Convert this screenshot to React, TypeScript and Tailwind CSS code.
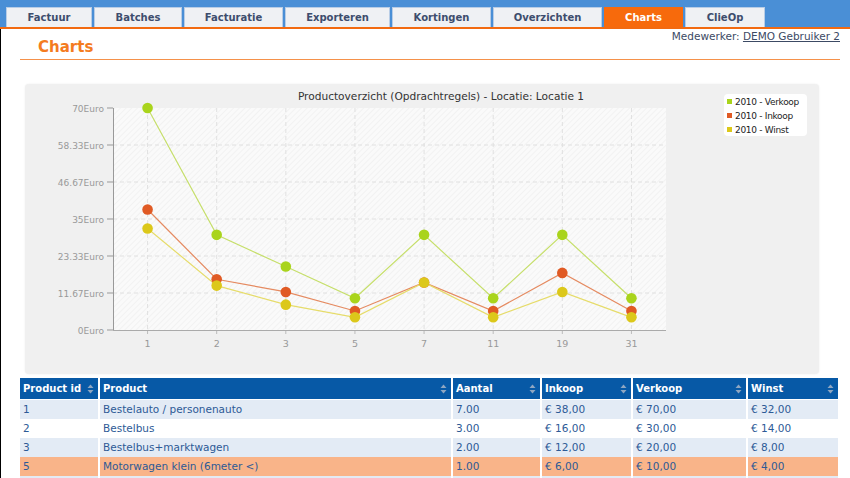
import React from "react";

const font = { fontFamily: "Tahoma, 'DejaVu Sans', sans-serif" };

const tabs = [
  { l: "Factuur", w: 86 },
  { l: "Batches", w: 88 },
  { l: "Facturatie", w: 99 },
  { l: "Exporteren", w: 105 },
  { l: "Kortingen", w: 99 },
  { l: "Overzichten", w: 109 },
  { l: "Charts", w: 79, active: true },
  { l: "ClieOp", w: 80 },
];

const cats = ["1", "2", "3", "5", "7", "11", "19", "31"];
const series = [
  { name: "2010 - Verkoop", color: "#a9d41c", line: "#c6df6a", data: [70, 30, 20, 10, 30, 10, 30, 10] },
  { name: "2010 - Inkoop", color: "#e05a24", line: "#e58a60", data: [38, 16, 12, 6, 15, 6, 18, 6] },
  { name: "2010 - Winst", color: "#dcc81a", line: "#e6dc6a", data: [32, 14, 8, 4, 15, 4, 12, 4] },
];
const yLabels = ["70Euro", "58.33Euro", "46.67Euro", "35Euro", "23.33Euro", "11.67Euro", "0Euro"];

const PX = 88, PY = 24, PW = 553, PH = 222;
const cx = (i: number) => PX + PW / 16 + (PW / 8) * i;
const cy = (v: number) => PY + PH - (v / 70) * PH;

function Chart() {
  return (
    <svg width={794} height={290} className="block">
      <defs>
        <pattern id="hatch" width="4" height="4" patternUnits="userSpaceOnUse" patternTransform="rotate(45)">
          <rect width="4" height="4" fill="#fafafa" />
          <line x1="0" y1="0" x2="0" y2="4" stroke="#f0f0f0" strokeWidth="1.5" />
        </pattern>
      </defs>
      <text x={416} y={16} textAnchor="middle" fontSize="10.6" fill="#333" style={font}>
        Productoverzicht (Opdrachtregels) - Locatie: Locatie 1
      </text>
      <rect x={PX} y={PY} width={PW} height={PH} fill="url(#hatch)" />
      {yLabels.map((l, i) => {
        const y = PY + (PH / 6) * i;
        return (
          <g key={l}>
            {i > 0 && i < 6 && (
              <line x1={PX} y1={y} x2={PX + PW} y2={y} stroke="#e0e0e0" strokeDasharray="4 3" />
            )}
            <line x1={PX - 6} y1={y} x2={PX} y2={y} stroke="#999" />
            <text x={PX - 9} y={y + 3.5} textAnchor="end" fontSize="9" fill="#999" style={font}>
              {l}
            </text>
          </g>
        );
      })}
      {cats.map((c, i) => (
        <g key={c}>
          <line x1={cx(i)} y1={PY} x2={cx(i)} y2={PY + PH} stroke="#e0e0e0" strokeDasharray="4 3" />
          <line x1={cx(i)} y1={PY + PH} x2={cx(i)} y2={PY + PH + 4} stroke="#bbb" />
          <text x={cx(i)} y={PY + PH + 17} textAnchor="middle" fontSize="9.5" fill="#999" style={font}>
            {c}
          </text>
        </g>
      ))}
      <line x1={PX + 0.5} y1={PY} x2={PX + 0.5} y2={PY + PH} stroke="#999" />
      <line x1={PX} y1={PY + PH + 0.5} x2={PX + PW} y2={PY + PH + 0.5} stroke="#aaa" />
      {series.map((s) => (
        <polyline
          key={s.name}
          points={s.data.map((v, i) => `${cx(i)},${cy(v)}`).join(" ")}
          fill="none"
          stroke={s.line}
          strokeWidth="1.2"
        />
      ))}
      {series.map((s) => (
        <g key={s.name + "d"}>
          {s.data.map((v, i) => (
            <circle key={i} cx={cx(i)} cy={cy(v)} r={5.3} fill={s.color} />
          ))}
        </g>
      ))}
      <rect x={699} y={10} width={83} height={42} rx={4} fill="#ffffff" />
      {series.map((s, i) => (
        <g key={s.name + "l"}>
          <rect x={702} y={15 + i * 14} width={5} height={5} fill={s.color} />
          <text x={710} y={21 + i * 14} fontSize="9" fill="#222" style={font} letterSpacing="-0.3">
            {s.name}
          </text>
        </g>
      ))}
    </svg>
  );
}

function SortIcon() {
  return (
    <svg width="7" height="10" viewBox="0 0 7 10" className="shrink-0">
      <path d="M3.5 0.5 L6.5 4 L0.5 4 Z" fill="#8ea6c2" />
      <path d="M3.5 9.5 L6.5 6 L0.5 6 Z" fill="#8ea6c2" />
    </svg>
  );
}

const cols = [
  { h: "Product id", w: "w-[78px]" },
  { h: "Product", w: "w-[351px]" },
  { h: "Aantal", w: "w-[87px]" },
  { h: "Inkoop", w: "w-[89px]" },
  { h: "Verkoop", w: "w-[113px]" },
  { h: "Winst", w: "w-[90px]" },
];

const rows = [
  { c: ["1", "Bestelauto / personenauto", "7.00", "€ 38,00", "€ 70,00", "€ 32,00"], bg: "bg-[#e3ebf5]" },
  { c: ["2", "Bestelbus", "3.00", "€ 16,00", "€ 30,00", "€ 14,00"], bg: "bg-white" },
  { c: ["3", "Bestelbus+marktwagen", "2.00", "€ 12,00", "€ 20,00", "€ 8,00"], bg: "bg-[#e3ebf5]" },
  { c: ["5", "Motorwagen klein (6meter <)", "1.00", "€ 6,00", "€ 10,00", "€ 4,00"], bg: "bg-[#f9b489]" },
  { c: ["", "", "", "", "", ""], bg: "bg-[#e3ebf5]" },
];

export default function App() {
  return (
    <div className="w-[850px] h-[478px] overflow-hidden bg-white" style={font}>
      <div className="h-[29px] bg-[#4a8fd6] border-b-2 border-[#f26a10] flex items-end pl-[6px] gap-[2px]">
        {tabs.map((t) => (
          <div
            key={t.l}
            style={{ width: t.w }}
            className={`h-[20px] flex items-center justify-center text-[10px] font-bold border border-b-0 ${
              t.active
                ? "bg-[#f76a0c] text-white border-[#f76a0c]"
                : "bg-[#eff1f4] text-[#3d4d6d] border-[#b8cde6]"
            }`}
          >
            {t.l}
          </div>
        ))}
      </div>
      <div className="border-l border-black h-[449px]">
        <div className="flex justify-between items-start h-[27px]">
          <div className="ml-[37px] mt-[9px] text-[15px] leading-[18px] font-bold text-[#f47b20]">Charts</div>
          <div className="mr-[10px] mt-[1px] text-[10.5px] leading-[13px] text-[#3c4a64]">
            Medewerker: <span className="underline">DEMO Gebruiker 2</span>
          </div>
        </div>
        <div className="ml-[19px] mr-[10px] mt-[3px] h-[1px] bg-[#f5914a]" />
        <div className="ml-[24px] mt-[24px] w-[794px] h-[290px] bg-[#f0f0f0] rounded-[4px] shadow-[0_0_2px_rgba(0,0,0,0.08)]">
          <Chart />
        </div>
        <div className="ml-[19px] mt-[4px] w-[818px] text-[10.5px]">
          <div className="flex gap-[2px] h-[21px] mb-[1px]">
            {cols.map((c) => (
              <div
                key={c.h}
                className={`${c.w} bg-[#0759a6] text-white font-bold text-[10px] flex items-center justify-between pl-[3px] pr-[4px]`}
              >
                <span>{c.h}</span>
                <SortIcon />
              </div>
            ))}
          </div>
          {rows.map((r, ri) => (
            <div key={ri} className="flex gap-[2px] h-[19px]">
              {r.c.map((v, i) => (
                <div key={i} className={`${cols[i].w} ${r.bg} text-[#2d5a96] flex items-center pl-[3px]`}>
                  {v}
                </div>
              ))}
            </div>
          ))}
        </div>
      </div>
    </div>
  );
}
